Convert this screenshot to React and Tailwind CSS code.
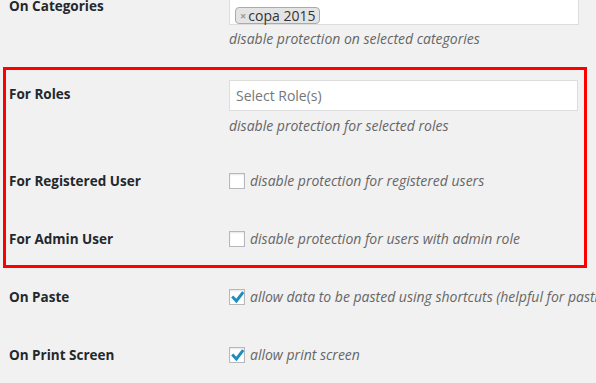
import React from "react";

const font = { fontFamily: "'Open Sans', 'Noto Sans', sans-serif" };

function Check({ checked }) {
  return (
    <span className="relative inline-block w-[16px] h-[16px] shrink-0 bg-white border border-[#b4b9be] shadow-[inset_0_1px_2px_rgba(0,0,0,0.1)]">
      {checked && (
        <svg className="absolute left-[-1px] top-[-1px]" width="16" height="16" viewBox="0 0 16 16">
          <path d="M3.2 7.6 L7.4 12 L14.2 3.2" fill="none" stroke="#1e8cbe" strokeWidth="2.9" strokeLinejoin="miter" />
        </svg>
      )}
    </span>
  );
}

function Label({ children }) {
  return (
    <div className="w-[220px] shrink-0 font-bold text-[13.5px] leading-[20px] text-[#23282d]">{children}</div>
  );
}

function Desc({ children, className = "" }) {
  return <div className={"italic text-[14px] leading-[20px] text-[#666] " + className}>{children}</div>;
}

function CheckRow({ label, text, checked, className = "" }) {
  return (
    <div className={"flex items-center h-[16px] " + className}>
      <Label>{label}</Label>
      <Check checked={checked} />
      <Desc className="ml-[5px]">{text}</Desc>
    </div>
  );
}

export default function App() {
  return (
    <div style={font} className="w-[596px] h-[383px] overflow-hidden bg-[#f1f1f1] whitespace-nowrap">
      <div className="pl-[9px] mt-[-7px]">
        <div className="flex items-start">
          <div className="pt-[3px]">
            <Label>On Categories</Label>
          </div>
          <div>
            <div className="w-[350px] h-[32px] bg-white border border-[#ddd] pt-[8px] pl-[5px]">
              <span className="inline-flex items-center h-[17px] px-[4px] bg-[#e4e4e4] border border-[#aaa] rounded-[4px] text-[14px] leading-[15px] text-[#333]">
                <span className="text-[#999] font-bold text-[11px] mr-[2px]">×</span>copa 2015
              </span>
            </div>
            <Desc className="mt-[4px]">disable protection on selected categories</Desc>
          </div>
        </div>
      </div>

      <div className="mt-[18px] ml-[3px] w-[584px] h-[201px] border-[3px] border-[#ff0000] pl-[3px]">
        <div className="flex items-start">
          <div className="pt-[14px]">
            <Label>For Roles</Label>
          </div>
          <div className="pt-[10px]">
            <div className="w-[349px] h-[31px] bg-white border border-[#ddd] flex items-center pl-[6px] text-[14px] text-[#72777c]">
              Select Role(s)
            </div>
            <Desc className="mt-[5px]">disable protection for selected roles</Desc>
          </div>
        </div>
        <CheckRow className="mt-[37px]" label="For Registered User" text="disable protection for registered users" />
        <CheckRow className="mt-[42px]" label="For Admin User" text="disable protection for users with admin role" />
      </div>

      <div className="pl-[9px]">
        <CheckRow
          className="mt-[21px]"
          checked
          label="On Paste"
          text="allow data to be pasted using shortcuts (helpful for pasting content from other sources)"
        />
        <CheckRow className="mt-[42px]" checked label="On Print Screen" text="allow print screen" />
      </div>
    </div>
  );
}
